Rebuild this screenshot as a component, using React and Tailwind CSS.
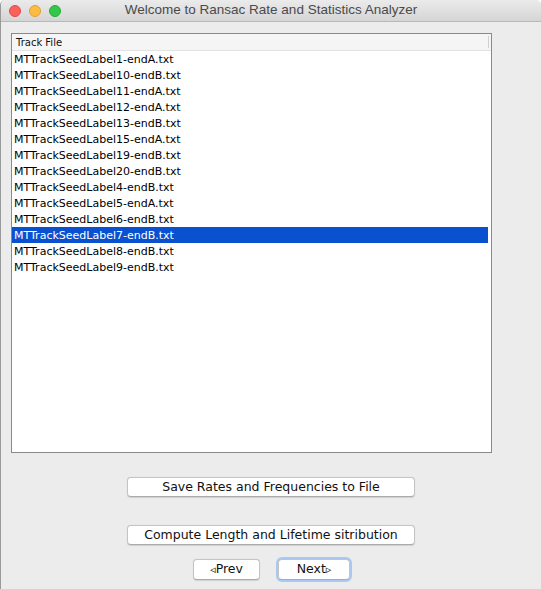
import React from "react";

const files = [
	"MTTrackSeedLabel1-endA.txt",
	"MTTrackSeedLabel10-endB.txt",
	"MTTrackSeedLabel11-endA.txt",
	"MTTrackSeedLabel12-endA.txt",
	"MTTrackSeedLabel13-endB.txt",
	"MTTrackSeedLabel15-endA.txt",
	"MTTrackSeedLabel19-endB.txt",
	"MTTrackSeedLabel20-endB.txt",
	"MTTrackSeedLabel4-endB.txt",
	"MTTrackSeedLabel5-endA.txt",
	"MTTrackSeedLabel6-endB.txt",
	"MTTrackSeedLabel7-endB.txt",
	"MTTrackSeedLabel8-endB.txt",
	"MTTrackSeedLabel9-endB.txt",
];

const selected = "MTTrackSeedLabel7-endB.txt";

function MacButton({ children, className = "" }) {
	return (
		<button
			className={`h-[20px] bg-white border border-[#c4c4c4] border-b-[#aaaaaa] rounded-[4px] text-[12.5px] text-[#111] leading-none shadow-[0_0.5px_1px_rgba(0,0,0,0.12)] ${className}`}
		>
			{children}
		</button>
	);
}

export default function App() {
	return (
		<div
			className="w-[541px] h-[589px] bg-[#ececec] flex flex-col overflow-hidden border-l border-[#9a9a9a] rounded-t-[5px]"
			style={{ fontFamily: '"DejaVu Sans", "Liberation Sans", sans-serif' }}
		>
			{/* title bar */}
			<div className="relative h-[22px] shrink-0 bg-gradient-to-b from-[#ebebeb] to-[#d5d5d5] border-b border-[#b8b8b8] flex items-center justify-center">
				<div className="absolute left-[8px] top-[5px] flex gap-[8px]">
					<span className="w-[12px] h-[12px] rounded-full bg-[#fc605c] border border-[#de4a46]" />
					<span className="w-[12px] h-[12px] rounded-full bg-[#fdbc40] border border-[#dea034]" />
					<span className="w-[12px] h-[12px] rounded-full bg-[#34c84a] border border-[#27aa35]" />
				</div>
				<span
					className="text-[13.5px] text-[#4a4a4a]"
					style={{ fontFamily: '"Liberation Sans", Arial, sans-serif' }}
				>
					Welcome to Ransac Rate and Statistics Analyzer
				</span>
			</div>

			{/* list */}
			<div className="ml-[10px] mt-[11px] w-[481px] h-[420px] bg-white border border-[#8a8a8a] flex flex-col">
				<div className="h-[17px] bg-[#f5f5f5] border-b border-[#e2e2e2] flex items-center relative">
					<span className="pl-[4px] text-[10px] text-[#111]">Track File</span>
					<span className="absolute right-[2px] top-[2px] w-px h-[12px] bg-[#d0d0d0]" />
				</div>
				<div className="flex flex-col w-[476px]">
					{files.map((f) => (
						<div
							key={f}
							className={`h-[16px] pl-[2px] flex items-center text-[11px] leading-none ${
								f === selected ? "bg-[#0a51d0] text-white" : "text-black"
							}`}
						>
							{f}
						</div>
					))}
				</div>
			</div>

			{/* buttons */}
			<div className="flex flex-col items-center">
				<MacButton className="mt-[24px] w-[288px]">
					Save Rates and Frequencies to File
				</MacButton>
				<MacButton className="mt-[28px] w-[288px]">
					Compute Length and Lifetime sitribution
				</MacButton>
				<div className="mt-[14px] flex gap-[18px] ml-[1px]">
					<MacButton className="w-[67px] h-[21px]">
						<span className="text-[11px]">◃</span>Prev
					</MacButton>
					<MacButton className="w-[72px] h-[21px] border-[#6fa5ec] border-b-[#6fa5ec] ring-2 ring-[#a9c9f3]">
						Next<span className="text-[11px]">▹</span>
					</MacButton>
				</div>
			</div>
		</div>
	);
}
